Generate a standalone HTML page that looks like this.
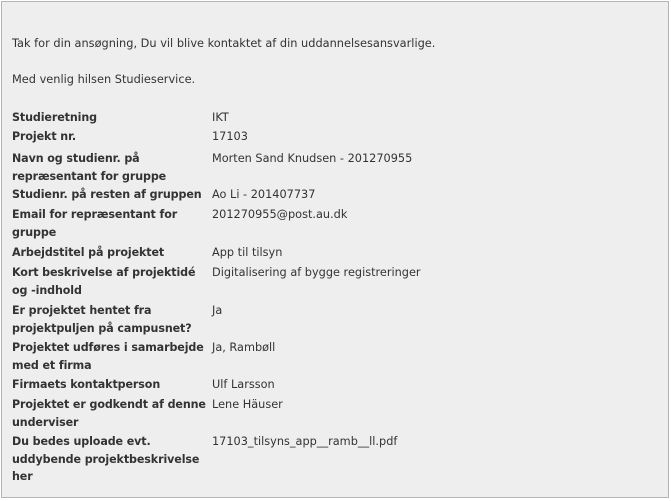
<!DOCTYPE html>
<html><head><meta charset="utf-8"><style>
body{margin:0;width:671px;height:501px;background:#fff;font-family:"DejaVu Sans","Liberation Sans",sans-serif;font-size:11.1px;color:#333;}
.box{position:absolute;left:1px;top:1px;width:666px;height:495px;border:1px solid #b4b4b4;background:#eeeeee;}
.t{position:absolute;left:10px;line-height:18px;white-space:nowrap;font-size:11.35px;}
.l{position:absolute;left:10px;line-height:17.5px;font-weight:bold;white-space:nowrap;letter-spacing:-0.1px;}
.v{position:absolute;left:210px;line-height:17.5px;white-space:nowrap;font-size:11.3px;}
</style></head><body><div class="box">
<div class="t" style="top:32px">Tak for din ansøgning, Du vil blive kontaktet af din uddannelsesansvarlige.</div>
<div class="t" style="top:68px">Med venlig hilsen Studieservice.</div>

<div class="l" style="top:107px">Studieretning</div><div class="v" style="top:107px">IKT</div>
<div class="l" style="top:126px">Projekt nr.</div><div class="v" style="top:126px">17103</div>
<div class="l" style="top:148px">Navn og studienr. på<br>repræsentant for gruppe</div><div class="v" style="top:148px">Morten Sand Knudsen - 201270955</div>
<div class="l" style="top:184px">Studienr. på resten af gruppen</div><div class="v" style="top:184px">Ao Li - 201407737</div>
<div class="l" style="top:204px">Email for repræsentant for<br>gruppe</div><div class="v" style="top:204px">201270955@post.au.dk</div>
<div class="l" style="top:242px">Arbejdstitel på projektet</div><div class="v" style="top:242px">App til tilsyn</div>
<div class="l" style="top:262px">Kort beskrivelse af projektidé<br>og -indhold</div><div class="v" style="top:262px">Digitalisering af bygge registreringer</div>
<div class="l" style="top:300px">Er projektet hentet fra<br>projektpuljen på campusnet?</div><div class="v" style="top:300px">Ja</div>
<div class="l" style="top:337px">Projektet udføres i samarbejde<br>med et firma</div><div class="v" style="top:337px">Ja, Rambøll</div>
<div class="l" style="top:374px">Firmaets kontaktperson</div><div class="v" style="top:374px">Ulf Larsson</div>
<div class="l" style="top:394px">Projektet er godkendt af denne<br>underviser</div><div class="v" style="top:394px">Lene Häuser</div>
<div class="l" style="top:431px">Du bedes uploade evt.<br>uddybende projektbeskrivelse<br>her</div><div class="v" style="top:431px">17103_tilsyns_app__ramb__ll.pdf</div>
</div></body></html>
